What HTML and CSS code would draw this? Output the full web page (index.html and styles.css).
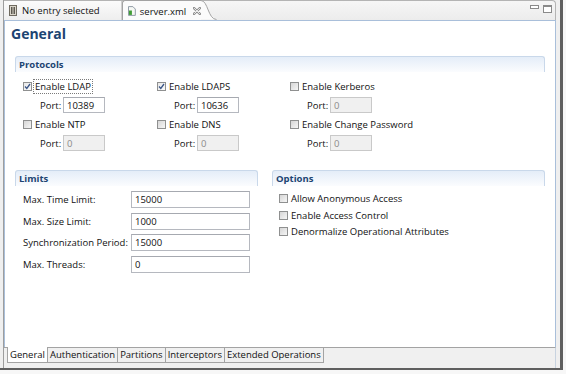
FILE: index.html
```html
<!DOCTYPE html>
<html>
<head>
<meta charset="utf-8">
<link rel="stylesheet" href="styles.css">
</head>
<body>
<div class="outer">
  <div class="editor">
    <div class="tabbar">
      <div class="tab inactive">
        <svg class="ico" width="8" height="11" viewBox="0 0 8 11">
          <rect x="0.5" y="0.5" width="7" height="10" fill="#d9d5c9" stroke="#6f6a5f"/>
          <path d="M2.5 2v7M4 2v7M5.5 2v7" stroke="#5d5950" stroke-width="1"/>
        </svg>
        <span>No entry selected</span>
      </div>
      <div class="tab active">
        <svg class="ico" width="8" height="10" viewBox="0 0 8 10">
          <path d="M0.5 0.5h4.5l2.5 2.5v6.5h-7z" fill="#f6f8f4" stroke="#8e9aa4"/>
          <rect x="1" y="4.5" width="3" height="4.5" fill="#3f9d36"/>
        </svg>
        <span>server.xml</span>
        <svg class="close" width="8" height="8" viewBox="0 0 8 8">
          <path d="M1 1L7 7M7 1L1 7" stroke="#8c8c8c" stroke-width="2.4" stroke-linecap="round"/>
          <path d="M1.3 1.3L6.7 6.7M6.7 1.3L1.3 6.7" stroke="#ffffff" stroke-width="0.9" stroke-linecap="round"/>
        </svg>
      </div>
      <svg class="curve" width="16" height="20" viewBox="0 0 16 20">
        <path d="M0 0.5C7 0.5 7 19.5 15.5 19.5L0 19.5Z" fill="#fbfbfb"/>
        <path d="M0 0.5C7 0.5 7 19.5 15.5 19.5" fill="none" stroke="#a3a3a3"/>
      </svg>
      <div class="spacer"></div>
      <div class="winbtns">
        <svg width="9" height="4" viewBox="0 0 9 4"><rect x="0.5" y="0.5" width="8" height="3" fill="#fff" stroke="#8a8a8a"/></svg>
        <svg width="9" height="8" viewBox="0 0 9 8"><rect x="0.5" y="0.5" width="8" height="7" fill="#fff" stroke="#8a8a8a"/><path d="M1 1.5h7" stroke="#8a8a8a"/></svg>
      </div>
    </div>

    <div class="content">
      <h1 class="title">General</h1>

      <section class="section">
        <div class="sec-head">Protocols</div>
        <div class="proto-grid">
          <label class="check"><span class="box checked"><svg width="7" height="7" viewBox="0 0 7 7"><path d="M1 3.5L2.8 5.5L6 1" fill="none" stroke="#3b5688" stroke-width="1.3"/></svg></span><span class="focus">Enable LDAP</span></label>
          <label class="check"><span class="box checked"><svg width="7" height="7" viewBox="0 0 7 7"><path d="M1 3.5L2.8 5.5L6 1" fill="none" stroke="#3b5688" stroke-width="1.3"/></svg></span><span>Enable LDAPS</span></label>
          <label class="check"><span class="box"></span><span>Enable Kerberos</span></label>

          <div class="port"><span class="plabel">Port:</span><span class="field">10389</span></div>
          <div class="port"><span class="plabel">Port:</span><span class="field">10636</span></div>
          <div class="port"><span class="plabel">Port:</span><span class="field disabled">0</span></div>

          <label class="check"><span class="box"></span><span>Enable NTP</span></label>
          <label class="check"><span class="box"></span><span>Enable DNS</span></label>
          <label class="check"><span class="box"></span><span>Enable Change Password</span></label>

          <div class="port"><span class="plabel">Port:</span><span class="field disabled">0</span></div>
          <div class="port"><span class="plabel">Port:</span><span class="field disabled">0</span></div>
          <div class="port"><span class="plabel">Port:</span><span class="field disabled">0</span></div>
        </div>
      </section>

      <div class="two-col">
        <section class="section">
          <div class="sec-head">Limits</div>
          <div class="limits-grid">
            <span class="llabel">Max. Time Limit:</span><span class="field">15000</span>
            <span class="llabel">Max. Size Limit:</span><span class="field">1000</span>
            <span class="llabel">Synchronization Period:</span><span class="field">15000</span>
            <span class="llabel">Max. Threads:</span><span class="field">0</span>
          </div>
        </section>
        <section class="section">
          <div class="sec-head">Options</div>
          <div class="options-list">
            <label class="check opt"><span class="box"></span><span>Allow Anonymous Access</span></label>
            <label class="check opt"><span class="box"></span><span>Enable Access Control</span></label>
            <label class="check opt"><span class="box"></span><span>Denormalize Operational Attributes</span></label>
          </div>
        </section>
      </div>
    </div>

    <div class="pagetabs">
      <div class="ptab current">General</div>
      <div class="ptab">Authentication</div>
      <div class="ptab">Partitions</div>
      <div class="ptab">Interceptors</div>
      <div class="ptab">Extended Operations</div>
    </div>
  </div>
</div>
</body>
</html>
```

FILE: styles.css
```css
* { box-sizing: border-box; }

body {
  margin: 0;
  width: 566px;
  height: 374px;
  overflow: hidden;
  background: #f7f7f7;
  font-family: "Open Sans", "Noto Sans", sans-serif;
  font-size: 9.5px;
  color: #111111;
}

.outer {
  width: 563px;
  height: 370px;
  padding: 0 4px 0 3px;
  border-right: 3px solid #5f5f5f;
  border-bottom: 2px solid #5f5f5f;
  background: #efefef;
  display: flex;
}

.editor {
  width: 553px;
  height: 368px;
  border-left: 1px solid #9d9d9d;
  display: flex;
  flex-direction: column;
}

/* top tab bar */
.tabbar {
  height: 20px;
  flex: none;
  display: flex;
  align-items: stretch;
  background: linear-gradient(#f6f6f6, #ececec);
  border-top: 1px solid #b4b4b4;
  border-right: 1px solid #b4b4b4;
  border-top-right-radius: 4px;
}

.tab {
  display: flex;
  align-items: center;
  white-space: nowrap;
}

.tab.inactive {
  width: 118px;
  padding-left: 5px;
  gap: 5px;
  background: linear-gradient(#fbfbfb, #eeeeee);
  border-right: 1px solid #cfcfcf;
}

.tab.active {
  width: 79px;
  padding-left: 5px;
  gap: 4px;
  background: #fbfbfb;
  border-left: 1px solid #a3a3a3;
  border-top: 1px solid #a3a3a3;
  border-top-left-radius: 3px;
  margin-top: -1px;
  height: 21px;
}

.tab.active .close { margin-left: 3px; }

.curve { flex: none; margin-top: -1px; display: block; }

.spacer { flex: 1; }

.winbtns {
  display: flex;
  align-items: flex-start;
  gap: 4px;
  padding: 4px 3px 0 0;
}

.winbtns svg { display: block; }

/* content */
.content {
  flex: 1;
  background: #ffffff;
  border: 1px solid #a9bfda;
  border-bottom: none;
  padding: 0 10px;
}

.title {
  margin: 4px 0 0 -4px;
  font-size: 14px;
  line-height: 17px;
  font-weight: bold;
  color: #1c4472;
}

.section { margin-top: 14px; }

.sec-head {
  height: 16px;
  line-height: 15px;
  padding-left: 3px;
  font-weight: bold;
  color: #1c4472;
  border: 1px solid #c9d8ea;
  border-bottom: none;
  border-radius: 3px 3px 0 0;
  background: linear-gradient(#e4edf8, #fbfcfe);
}

.proto-grid {
  display: grid;
  grid-template-columns: 134px 133px 1fr;
  grid-auto-rows: 16px;
  row-gap: 3px;
  padding: 6px 0 0 8px;
}

.check {
  display: flex;
  align-items: center;
  gap: 3px;
  white-space: nowrap;
}

.box {
  width: 9px;
  height: 9px;
  flex: none;
  border: 1px solid #8f9090;
  background: linear-gradient(135deg, #d6d6d6, #f6f6f6);
  display: flex;
  align-items: center;
  justify-content: center;
}

.box.checked { background: linear-gradient(135deg, #e8e8e8, #fbfbfb); }
.box svg { display: block; }

.focus {
  outline: 1px dotted #7a7a7a;
  outline-offset: 0;
  padding: 0 1px;
  margin-left: -1px;
}

.port {
  display: flex;
  align-items: center;
  padding-left: 17px;
}

.plabel { width: 23px; flex: none; }

.field {
  display: flex;
  align-items: center;
  width: 42px;
  height: 16px;
  padding-left: 3px;
  border: 1px solid #b5b8bf;
  border-top-color: #a6a9b0;
  background: #fff;
  white-space: nowrap;
}

.field.disabled {
  background: #f0f0f0;
  border-color: #c9c9c9;
  color: #8b8b8b;
}

.two-col {
  display: grid;
  grid-template-columns: 243px 273px;
  column-gap: 14px;
  margin-top: 5px;
}

.limits-grid {
  display: grid;
  grid-template-columns: 108px 119px;
  grid-auto-rows: 17px;
  row-gap: 4.7px;
  padding: 5px 0 0 8px;
  align-items: center;
}

.limits-grid .field { width: 119px; height: 17px; }

.llabel { white-space: nowrap; }

.options-list {
  display: flex;
  flex-direction: column;
  padding: 4.5px 0 0 7px;
}

.opt { height: 16.5px; }

/* bottom page tabs */
.pagetabs {
  height: 21px;
  flex: none;
  display: flex;
  align-items: flex-start;
  padding-left: 3px;
  background: #f0f0f0;
  border-top: 1px solid #a3a3a3;
  border-right: 1px solid #c8d3e0;
}

.ptab {
  height: 15px;
  line-height: 13px;
  padding: 0 2px 0 2px;
  border-right: 1px solid #a3a3a3;
  border-bottom: 1px solid #a3a3a3;
  white-space: nowrap;
  background: #f0f0f0;
}

.ptab.current {
  background: #ffffff;
  border-left: 1px solid #a3a3a3;
  margin-top: -1px;
  height: 16px;
  padding-top: 1px;
}
```
